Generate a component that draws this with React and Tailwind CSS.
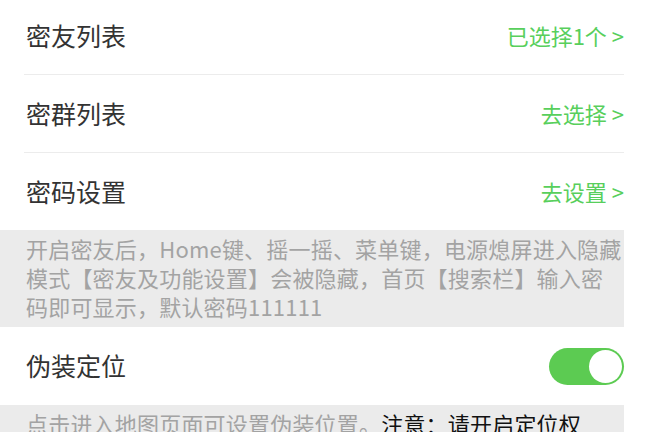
import React, { useState } from 'react';

const rows = [
  { title: '密友列表', action: '已选择1个 >' },
  { title: '密群列表', action: '去选择 >' },
  { title: '密码设置', action: '去设置 >' },
];

export default function App() {
  const [fake, setFake] = useState(true);

  return (
    <div className="h-[432px] overflow-hidden bg-white font-['Noto_Sans_CJK_SC',sans-serif]">
      <div className="-mt-[3px] w-[624px]">
        {rows.map((row, i) => (
          <div key={row.title}>
            {i > 0 && <div className="ml-6 h-px bg-[#ececec]"></div>}
            <div className="flex h-[77px] items-center justify-between pl-[26px]">
              <span className="text-[25px] text-[#333333]">{row.title}</span>
              <span className="text-[22px] text-[#58cf5c]">{row.action}</span>
            </div>
          </div>
        ))}

        <div className="bg-[#ebebeb] pl-[26px] pt-[4px] pb-[6px] h-[97px] text-[22px] leading-[29px] tracking-[0.2px] text-[#a3a3a3] whitespace-nowrap">
          开启密友后，Home键、摇一摇、菜单键，电源熄屏进入隐藏
          <br />
          模式【密友及功能设置】会被隐藏，首页【搜索栏】输入密
          <br />
          码即可显示，默认密码111111
        </div>

        <div className="flex h-[78px] items-center justify-between pl-[26px]">
          <span className="text-[25px] text-[#333333]">伪装定位</span>
          <button
            type="button"
            onClick={() => setFake(!fake)}
            className={`relative h-[37px] w-[75px] rounded-full ${fake ? 'bg-[#5ccb52]' : 'bg-[#e5e5e5]'}`}
          >
            <span
              className={`absolute top-[2px] h-[33px] w-[33px] rounded-full bg-white ${fake ? 'right-[2px]' : 'left-[2px]'}`}
            ></span>
          </button>
        </div>

        <div className="bg-[#ebebeb] pl-[26px] pt-[4px] pb-[6px] text-[22px] leading-[29px] tracking-[0.2px] text-[#a3a3a3] whitespace-nowrap">
          点击进入地图页面可设置伪装位置。<span className="text-[#111111]">注意：请开启定位权</span>
          <br />
          限，否则无法正常使用
        </div>
      </div>
    </div>
  );
}
